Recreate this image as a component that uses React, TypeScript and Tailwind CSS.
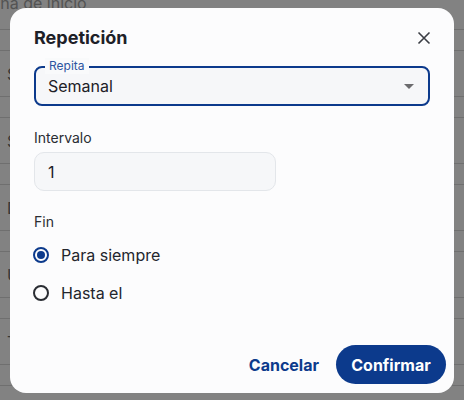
import { useState } from 'react';

const rows = ['Semana', 'Sala', 'Descripción', 'Ubicación', 'Tipo', 'Notas'];

function Radio({ checked, label, onClick }: { checked: boolean; label: string; onClick: () => void }) {
  return (
    <button type="button" onClick={onClick} className="-ml-[1px] flex h-6 items-center gap-3 text-left">
      <span
        className={`flex h-4 w-4 items-center justify-center rounded-full border-2 ${
          checked ? 'border-[#0c3a8c]' : 'border-[#2a2d33]'
        }`}
      >
        {checked && <span className="h-2 w-2 rounded-full bg-[#0c3a8c]" />}
      </span>
      <span className="text-base text-[#23262d]">{label}</span>
    </button>
  );
}

export default function App() {
  const [end, setEnd] = useState<'forever' | 'until'>('forever');

  return (
    <div
      className="relative h-[400px] w-[464px] overflow-hidden bg-white"
      style={{ fontFamily: 'Inter, "Noto Sans", sans-serif' }}
    >
      {/* Page behind the dialog */}
      <div className="flex flex-col">
        <div className="h-[29px]">
          <div className="-ml-[27px] -mt-[9px] text-base text-[#a3a3a3]">Fecha de inicio</div>
        </div>
        {rows.map((row) => (
          <div key={row} className="flex flex-col">
            <div className="h-[21px] border-t border-[#dadada]" />
            <div className="flex h-[46px] items-center border-t border-[#dadada] pl-[7px] text-base text-[#6b6b6b]">
              {row}
            </div>
          </div>
        ))}
      </div>

      {/* Overlay */}
      <div className="absolute inset-0 bg-black/[0.49]" />

      {/* Dialog */}
      <div className="absolute left-[10px] top-[8px] flex h-[385px] w-[444px] flex-col rounded-2xl bg-[#fcfcfd]">
        <div className="flex flex-1 flex-col px-6 pt-4">
          <div className="flex h-7 items-center justify-between">
            <h2 className="text-lg font-bold text-[#1d2027]">Repetición</h2>
            <button type="button" className="mr-[-1px] text-[#3a3d44]">
              <svg width="14" height="14" viewBox="0 0 14 14" fill="none" stroke="currentColor" strokeWidth="1.6">
                <path d="M1.5 1.5l11 11M12.5 1.5l-11 11" />
              </svg>
            </button>
          </div>

          <div className="relative mt-[14px] flex h-10 items-center justify-between rounded-lg border-2 border-[#0c3a8c] bg-[#f6f7f9] pl-3 pr-[14px]">
            <span className="absolute -top-[10px] left-[9px] bg-[#f9fafb] px-[4px] text-xs leading-4 text-[#2d55a0]">
              Repita
            </span>
            <span className="text-base text-[#1d2027]">Semanal</span>
            <svg width="10" height="5" viewBox="0 0 10 5" className="text-[#6b6b6e]">
              <path d="M0 0h10L5 5z" fill="currentColor" />
            </svg>
          </div>

          <label className="mt-[22px] text-sm text-[#2a2d33]">Intervalo</label>
          <div className="mt-1 flex h-[39px] w-[242px] items-center rounded-[10px] border border-[#e3e6ea] bg-[#f6f7f9] px-[13px] text-base text-[#1d2027]">
            1
          </div>

          <span className="mt-[21px] text-sm text-[#2a2d33]">Fin</span>
          <div className="mt-[11px] flex flex-col gap-[14px]">
            <Radio checked={end === 'forever'} label="Para siempre" onClick={() => setEnd('forever')} />
            <Radio checked={end === 'until'} label="Hasta el" onClick={() => setEnd('until')} />
          </div>
        </div>

        <div className="flex items-center justify-end gap-[5px] pb-[9px] pr-2">
          <button type="button" className="h-[39px] px-3 text-base font-bold text-[#0c3a8c]">
            Cancelar
          </button>
          <button
            type="button"
            className="h-[39px] w-[110px] rounded-full bg-[#0c3a8c] text-base font-bold text-white"
          >
            Confirmar
          </button>
        </div>
      </div>
    </div>
  );
}
